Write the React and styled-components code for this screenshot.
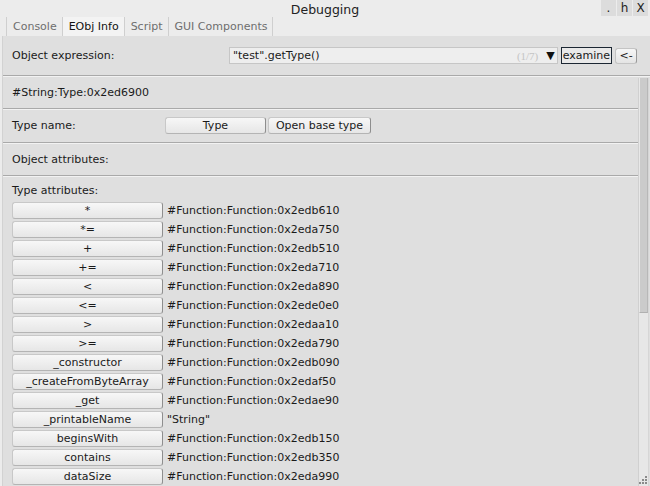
import React from "react";
import styled, { createGlobalStyle } from "styled-components";

const Global = createGlobalStyle`
  html, body { margin: 0; padding: 0; }
  body { background: #ececec; font-family: "DejaVu Sans", Verdana, sans-serif; font-size: 11px; color: #1a1a1a; }
  * { box-sizing: border-box; }
`;

const Window = styled.div`
  width: 650px;
  height: 486px;
  display: flex;
  flex-direction: column;
  background: #ececec;
  overflow: hidden;
`;

const TitleBar = styled.div`
  position: relative;
  height: 17px;
  display: flex;
  align-items: center;
  justify-content: center;
  font-size: 12.5px;
  color: #222;
  padding-top: 1px;
`;

const WinButtons = styled.div`
  position: absolute;
  right: 2px;
  top: 0;
  display: flex;
  gap: 1px;
`;

const WinBtn = styled.div`
  width: 15px;
  height: 16px;
  background: #dcdcdc;
  display: flex;
  align-items: center;
  justify-content: center;
  font-size: 12px;
  color: #222;
`;

const TabBar = styled.div`
  height: 19px;
  display: flex;
  align-items: stretch;
  padding-left: 6px;
`;

const Tab = styled.div`
  padding: 0 5px 0 6px;
  display: flex;
  align-items: center;
  font-size: 11px;
  color: ${(p) => (p.$active ? "#111" : "#6e6e6e")};
  background: ${(p) => (p.$active ? "#f3f3f3" : "transparent")};
  border-left: 1px solid #cfcfcf;
  &:last-child { border-right: 1px solid #cfcfcf; }
`;

const Panel = styled.div`
  flex: 1;
  margin-left: 2px;
  background: #dfdfdf;
  display: flex;
  flex-direction: column;
  min-height: 0;
  border-left: 1px solid #d2d2d2;
`;

const HeaderRow = styled.div`
  height: 40px;
  flex-shrink: 0;
  display: flex;
  align-items: center;
  padding: 0 13px 0 9px;
  border-bottom: 1px solid #a9a9a9;
  box-shadow: 0 1px 0 #f2f2f2;
`;

const Label = styled.div`
  font-size: 11px;
  width: ${(p) => p.$w || "auto"};
  flex-shrink: 0;
`;

const ComboBox = styled.div`
  width: 330px;
  height: 17px;
  background: #eeeeee;
  border: 1px solid #c6c6c6;
  display: flex;
  align-items: center;
  padding: 0 2px 0 3px;
  font-size: 11px;
`;

const ComboText = styled.span`
  flex: 1;
`;

const Count = styled.span`
  color: #c4c4c4;
  font-family: "Liberation Serif", serif;
  font-size: 11px;
  margin-right: 8px;
`;

const Arrow = styled.span`
  font-size: 11px;
  color: #111;
`;

const ExamineBtn = styled.div`
  margin-left: 3px;
  height: 17px;
  padding: 0 1px;
  border: 1px solid #1c2733;
  background: #e9e9e9;
  display: flex;
  align-items: center;
  font-size: 11px;
`;

const SmallBtn = styled.div`
  margin-left: 3px;
  height: 16px;
  width: 22px;
  border: 1px solid #c4c4c4;
  border-right-color: #9a9a9a;
  border-radius: 3px;
  background: linear-gradient(#f6f6f6, #e4e4e4);
  display: flex;
  align-items: center;
  justify-content: center;
  font-size: 11px;
`;

const ScrollArea = styled.div`
  flex: 1;
  display: flex;
  min-height: 0;
`;

const Content = styled.div`
  flex: 1;
  overflow: hidden;
  display: flex;
  flex-direction: column;
`;

const Section = styled.div`
  height: ${(p) => p.$h}px;
  flex-shrink: 0;
  display: flex;
  align-items: center;
  padding-left: 9px;
  border-bottom: 1px solid #a9a9a9;
  box-shadow: 0 1px 0 #f2f2f2;
  font-size: 11px;
`;

const Button = styled.div`
  width: ${(p) => p.$w}px;
  height: 17px;
  margin-right: 2px;
  flex-shrink: 0;
  border: 1px solid #c8c8c8;
  border-right-color: #8e8e8e;
  border-bottom-color: #b4b4b4;
  border-radius: 3px;
  background: linear-gradient(#f7f7f7, #e6e6e6);
  display: flex;
  align-items: center;
  justify-content: center;
  font-size: 11px;
  color: #1a1a1a;
  white-space: nowrap;
`;

const AttrHeader = styled.div`
  flex-shrink: 0;
  padding: 8px 0 0 9px;
  height: 26px;
  font-size: 11px;
`;

const AttrList = styled.div`
  display: flex;
  flex-direction: column;
  gap: 2px;
  padding-left: 9px;
`;

const AttrRow = styled.div`
  display: flex;
  align-items: center;
  height: 17px;
  flex-shrink: 0;
`;

const Value = styled.div`
  margin-left: 2px;
  font-size: 11px;
  white-space: nowrap;
`;

const ScrollBar = styled.div`
  width: 11px;
  margin-right: 1px;
  margin-top: 2px;
  background: #e7e7e7;
  border-left: 1px solid #d0d0d0;
  border-right: 1px solid #d6d6d6;
  display: flex;
  flex-direction: column;
  position: relative;
`;

const Thumb = styled.div`
  height: 235px;
  background: #cbcbcb;
  border-left: 1px solid #e8e8e8;
  border-right: 1px solid #b8b8b8;
  border-bottom: 1px solid #b0b0b0;
`;

const Grip = styled.svg`
  position: absolute;
  right: 0;
  bottom: 1px;
`;

const attrs = [
  ["*", "#Function:Function:0x2edb610"],
  ["*=", "#Function:Function:0x2eda750"],
  ["+", "#Function:Function:0x2edb510"],
  ["+=", "#Function:Function:0x2eda710"],
  ["<", "#Function:Function:0x2eda890"],
  ["<=", "#Function:Function:0x2ede0e0"],
  [">", "#Function:Function:0x2edaa10"],
  [">=", "#Function:Function:0x2eda790"],
  ["_constructor", "#Function:Function:0x2edb090"],
  ["_createFromByteArray", "#Function:Function:0x2edaf50"],
  ["_get", "#Function:Function:0x2edae90"],
  ["_printableName", '"String"'],
  ["beginsWith", "#Function:Function:0x2edb150"],
  ["contains", "#Function:Function:0x2edb350"],
  ["dataSize", "#Function:Function:0x2eda990"],
];

export default function App() {
  return (
    <>
      <Global />
      <Window>
        <TitleBar>
          Debugging
          <WinButtons>
            <WinBtn>.</WinBtn>
            <WinBtn>h</WinBtn>
            <WinBtn>X</WinBtn>
          </WinButtons>
        </TitleBar>
        <TabBar>
          <Tab>Console</Tab>
          <Tab $active>EObj Info</Tab>
          <Tab>Script</Tab>
          <Tab>GUI Components</Tab>
        </TabBar>
        <Panel>
          <HeaderRow>
            <Label $w="217px">Object expression:</Label>
            <ComboBox>
              <ComboText>"test".getType()</ComboText>
              <Count>(1/7)</Count>
              <Arrow>▼</Arrow>
            </ComboBox>
            <ExamineBtn>examine</ExamineBtn>
            <SmallBtn>&lt;-</SmallBtn>
          </HeaderRow>
          <ScrollArea>
            <Content>
              <Section $h={33}>#String:Type:0x2ed6900</Section>
              <Section $h={34}>
                <Label $w="153px">Type name:</Label>
                <Button $w={101}>Type</Button>
                <Button $w={103}>Open base type</Button>
              </Section>
              <Section $h={33}>Object attributes:</Section>
              <AttrHeader>Type attributes:</AttrHeader>
              <AttrList>
                {attrs.map(([k, v]) => (
                  <AttrRow key={k}>
                    <Button $w={151}>{k}</Button>
                    <Value>{v}</Value>
                  </AttrRow>
                ))}
              </AttrList>
            </Content>
            <ScrollBar>
              <Thumb />
              <Grip width="10" height="10" viewBox="0 0 10 10">
                <rect x="7" y="1" width="2" height="2" fill="#8a8a8a" />
                <rect x="4" y="4" width="2" height="2" fill="#8a8a8a" />
                <rect x="7" y="4" width="2" height="2" fill="#8a8a8a" />
                <rect x="1" y="7" width="2" height="2" fill="#8a8a8a" />
                <rect x="4" y="7" width="2" height="2" fill="#8a8a8a" />
                <rect x="7" y="7" width="2" height="2" fill="#8a8a8a" />
              </Grip>
            </ScrollBar>
          </ScrollArea>
        </Panel>
      </Window>
    </>
  );
}
